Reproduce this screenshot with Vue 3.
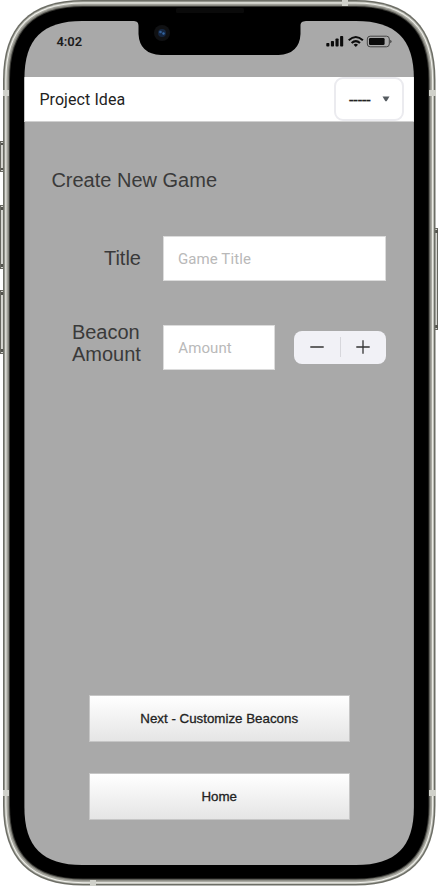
<script setup>
import { ref } from 'vue'

const title = ref('')
const amount = ref('')

function step(delta) {
  amount.value = String(Math.max(0, (Number(amount.value) || 0) + delta))
}

// Continuous-curvature rounded rectangle: each corner starts `a` away from
// the edge and passes its diagonal `d` in from both sides.
function squircle(x, y, w, h, a, d) {
  const k = (8 * d - a) / 3
  const r = x + w
  const b = y + h
  return `M${x} ${y + a}C${x} ${y + k} ${x + k} ${y} ${x + a} ${y}H${r - a}` +
    `C${r - k} ${y} ${r} ${y + k} ${r} ${y + a}V${b - a}` +
    `C${r} ${b - k} ${r - k} ${b} ${r - a} ${b}H${x + a}` +
    `C${x + k} ${b} ${x} ${b - k} ${x} ${b - a}Z`
}

const layers = [
  [0, '#6d6e66'],
  [1.5, '#b9bab2'],
  [2.4, '#f1f1ec'],
  [3.4, '#aaaaa2'],
  [4.8, '#85857e'],
  [6, '#383834'],
  [7, '#000'],
].map(([i, fill]) => ({
  fill,
  d: squircle(3 + i, i, 432.5 - 2 * i, 885.6 - 2 * i, 80 - i, 20 - i * 0.293),
}))
</script>

<template>
  <div class="device">
    <svg class="frame" viewBox="0 0 438 886" aria-hidden="true">
      <g fill="#d5d5d0" stroke="#66665f" stroke-width="1">
        <rect x="0.5" y="141.5" width="5" height="30" />
        <rect x="0.5" y="205.5" width="5" height="63" />
        <rect x="0.5" y="290.5" width="5" height="63" />
        <rect x="432.5" y="228.5" width="5" height="101" />
      </g>
      <path fill="#55554f" d="M1 143h3v2H1zM1 168h3v2H1zM1 207h3v3H1zM1 264h3v3H1zM1 292h3v3H1zM1 349h3v3H1zM435 230h3v3h-3zM435 325h3v3h-3z" />
      <path v-for="layer in layers" :key="layer.fill" :d="layer.d" :fill="layer.fill" />
      <path fill="#d0d1ca" d="M3 90h6v6H3zM429 90h7v6h-7zM3 790h6v6H3zM429 790h7v6h-7zM342 0h6v6h-6zM90 880h6v6h-6z" />
      <rect x="176" y="8" width="68" height="5" rx="1.5" fill="#0a0a0a" />
    </svg>

    <div class="screen">
      <header class="status">
        <span class="clock">4:02</span>
        <svg class="indicators" viewBox="0 0 66 14" aria-hidden="true">
          <rect x="0.3" y="8" width="3.1" height="3.6" rx="0.8" />
          <rect x="4.9" y="6" width="3.1" height="5.6" rx="0.8" />
          <rect x="9.5" y="3.5" width="3.1" height="8.1" rx="0.8" />
          <rect x="14.1" y="1" width="3.1" height="10.6" rx="0.8" />
          <g fill="none" stroke="#0b0b0b" stroke-width="2">
            <path d="M22.7 5.3Q29.8 -1.2 36.9 5.3" />
            <path d="M25.6 8.1Q29.8 4.2 34 8.1" />
          </g>
          <path d="M27.6 9.7Q29.8 7.9 32 9.7L29.8 12z" />
          <rect x="41.3" y="1.2" width="22" height="10.6" rx="2.8" fill="none" stroke="#444" stroke-width="1" />
          <rect x="43" y="2.9" width="15.6" height="7.2" rx="1.3" />
          <path d="M64.2 4.8q1.4 .4 1.4 1.7t-1.4 1.7z" fill="#444" />
        </svg>
        <svg class="notch" viewBox="0 0 172 35" aria-hidden="true">
          <path d="M0 0H172C168 .3 166.5 1.5 166.5 5V13Q165.5 33 144.5 34H27Q5.5 33 4.5 13V5C4.5 1.5 3 .3 0 0z" />
          <circle cx="28" cy="12" r="8" fill="#101113" />
          <circle cx="28" cy="12" r="4" fill="#152640" />
          <circle cx="26.5" cy="11" r="1.3" fill="#315b90" />
          <circle cx="29.5" cy="12.5" r="1.2" fill="#3568a4" />
        </svg>
      </header>

      <nav class="bar">
        <span class="brand">Project Idea</span>
        <button class="picker" type="button">
          <span>-----</span>
          <svg viewBox="0 0 8 6" aria-hidden="true"><path d="M.5 .5h7L4.6 5.3H3.4z" fill="#555b60" /></svg>
        </button>
      </nav>

      <main class="form">
        <h1>Create New Game</h1>
        <div class="row">
          <label for="title">Title</label>
          <input id="title" v-model="title" class="wide" placeholder="Game Title" />
        </div>
        <div class="row second">
          <label for="amount">Beacon<br />Amount</label>
          <input id="amount" v-model="amount" class="short" placeholder="Amount" />
          <div class="stepper">
            <button type="button" @click="step(-1)">
              <svg viewBox="0 0 14 14"><path d="M.3 7h13.4" /></svg>
            </button>
            <i></i>
            <button type="button" @click="step(1)">
              <svg viewBox="0 0 14 14"><path d="M.3 7h13.4M7 .3v13.4" /></svg>
            </button>
          </div>
        </div>
      </main>

      <footer class="actions">
        <button type="button">Next - Customize Beacons</button>
        <button type="button">Home</button>
      </footer>
    </div>
  </div>
</template>

<style>
body {
  background: #fff;
  overflow: hidden;
}
</style>

<style scoped>
* {
  box-sizing: border-box;
}
.device {
  position: relative;
  width: 438px;
  height: 886px;
  padding: 21px 24px 21px 24.4px;
  font-family: 'Liberation Sans', Arial, sans-serif;
}
.frame {
  position: absolute;
  inset: 0;
  width: 438px;
  height: 886px;
}
.screen {
  position: relative;
  display: flex;
  flex-direction: column;
  height: 844px;
  overflow: hidden;
  clip-path: path('M0 58C0 18 18 0 58 0H331.5C371.5 0 389.5 18 389.5 58V786C389.5 826 371.5 844 331.5 844H58C18 844 0 826 0 786Z');
  background: #a9a9a9;
}
.status {
  position: relative;
  display: flex;
  justify-content: space-between;
  align-items: flex-start;
  height: 56px;
  padding: 14px 22px 0 32px;
}
.clock {
  font: 600 13px/14px Roboto, sans-serif;
  color: #1c1c1c;
}
.indicators {
  width: 66px;
  height: 14px;
  fill: #0b0b0b;
}
.notch {
  position: absolute;
  left: 110px;
  top: 0;
  width: 172px;
  height: 35px;
}
.bar {
  display: flex;
  justify-content: space-between;
  align-items: center;
  height: 45px;
  padding: 0 10px 0 15px;
  background: #fff;
  border-bottom: 1px solid #d0d0d0;
}
.brand {
  padding-top: 2px;
  font: 400 16px/20px Roboto, sans-serif;
  letter-spacing: 0.08px;
  color: #222;
}
button {
  margin: 0;
  padding: 0;
  border: 0;
  font-family: inherit;
}
.picker {
  display: flex;
  align-items: center;
  justify-content: space-between;
  width: 70px;
  height: 44px;
  padding: 0 12px 0 13px;
  border: 2px solid #ebebef;
  border-radius: 9px;
  background: #fff;
  font: 400 14px/18px Roboto, sans-serif;
  color: #222;
}
.picker span {
  padding-top: 3px;
  font-size: 16px;
  letter-spacing: -0.1px;
  -webkit-text-stroke: 0.2px #222;
}
.picker svg {
  width: 8px;
  height: 6px;
}
.form {
  padding: 45px 28px 0 27px;
}
h1 {
  margin: 0;
  font-size: 20px;
  line-height: 26px;
  font-weight: 400;
  color: #3a3a3a;
}
.row {
  display: flex;
  align-items: center;
  margin-top: 43px;
  height: 44px;
}
.row.second {
  margin-top: 45px;
}
label {
  width: 90px;
  margin-right: 22px;
  text-align: right;
  font-size: 20px;
  line-height: 22px;
  color: #3a3a3a;
}
.second label {
  padding-left: 20.5px;
  text-align: left;
  padding-bottom: 8px;
}
input {
  min-width: 0;
  height: 45px;
  padding: 2px 14px 0;
  border: 1px solid #dcdcdc;
  border-radius: 0;
  outline: 0;
  background: #fff;
  font: 400 15px/20px Roboto, sans-serif;
  letter-spacing: 0.1px;
  color: #222;
}
input::placeholder {
  color: #b9b9b9;
  opacity: 1;
}
.wide {
  width: 224px;
}
.short {
  width: 112px;
}
.stepper {
  display: flex;
  align-items: center;
  width: 92px;
  height: 33px;
  margin-left: 19px;
  border-radius: 8px;
  background: #f1f1f6;
}
.stepper button {
  display: flex;
  flex: 1;
  justify-content: center;
  background: none;
}
.stepper svg {
  width: 14px;
  height: 14px;
  fill: none;
  stroke: #333;
  stroke-width: 1.3;
}
.stepper i {
  width: 1px;
  height: 20px;
  background: #d7d7dc;
}
.actions {
  display: flex;
  flex-direction: column;
  align-items: center;
  gap: 31px;
  margin-top: auto;
  padding-bottom: 45px;
}
.actions button {
  width: 261px;
  height: 47px;
  border: 1px solid #c6c6c6;
  background: linear-gradient(#fff, #e5e5e5);
  font: 400 13.33px/18px 'Liberation Sans', Arial, sans-serif;
  -webkit-text-stroke: 0.3px #222;
  color: #222;
}
</style>
